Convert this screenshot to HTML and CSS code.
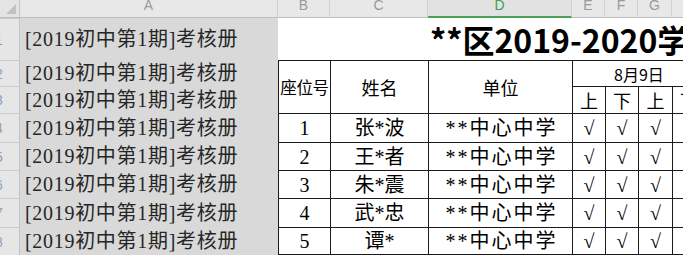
FILE: index.html
```html
<!DOCTYPE html>
<html lang="zh-CN">
<head>
<meta charset="utf-8">
<title>考核册</title>
<link rel="stylesheet" href="styles.css">
</head>
<body>
<div class="sheet">
  <div class="corner"><span class="tri"></span></div>
  <div class="ch">A</div>
  <div class="ch">B</div>
  <div class="ch">C</div>
  <div class="ch ch-sel">D</div>
  <div class="ch">E</div>
  <div class="ch">F</div>
  <div class="ch">G</div>
  <div class="ch">H</div>

  <div class="rh"><span>1</span></div>
  <div class="ca">[2019初中第1期]考核册</div>
  <div class="title">**区2019-2020学</div>

  <div class="rh"><span>2</span></div>
  <div class="ca">[2019初中第1期]考核册</div>
  <div class="tc hd hd-tall hd-seat">座位号</div>
  <div class="tc hd hd-tall">姓名</div>
  <div class="tc hd hd-tall">单位</div>
  <div class="tc hd hd-date">8月9日</div>

  <div class="rh"><span>3</span></div>
  <div class="ca">[2019初中第1期]考核册</div>
  <div class="tc hd">上</div>
  <div class="tc hd">下</div>
  <div class="tc hd">上</div>
  <div class="tc hd">下</div>

  <div class="rh"><span>4</span></div>
  <div class="ca">[2019初中第1期]考核册</div>
  <div class="tc num">1</div>
  <div class="tc txt">张*波</div>
  <div class="tc txt school">**中心中学</div>
  <div class="tc chk">√</div>
  <div class="tc chk">√</div>
  <div class="tc chk">√</div>
  <div class="tc"></div>

  <div class="rh"><span>5</span></div>
  <div class="ca">[2019初中第1期]考核册</div>
  <div class="tc num">2</div>
  <div class="tc txt">王*者</div>
  <div class="tc txt school">**中心中学</div>
  <div class="tc chk">√</div>
  <div class="tc chk">√</div>
  <div class="tc chk">√</div>
  <div class="tc"></div>

  <div class="rh"><span>6</span></div>
  <div class="ca">[2019初中第1期]考核册</div>
  <div class="tc num">3</div>
  <div class="tc txt">朱*震</div>
  <div class="tc txt school">**中心中学</div>
  <div class="tc chk">√</div>
  <div class="tc chk">√</div>
  <div class="tc chk">√</div>
  <div class="tc"></div>

  <div class="rh"><span>7</span></div>
  <div class="ca">[2019初中第1期]考核册</div>
  <div class="tc num">4</div>
  <div class="tc txt">武*忠</div>
  <div class="tc txt school">**中心中学</div>
  <div class="tc chk">√</div>
  <div class="tc chk">√</div>
  <div class="tc chk">√</div>
  <div class="tc"></div>

  <div class="rh"><span>8</span></div>
  <div class="ca">[2019初中第1期]考核册</div>
  <div class="tc num last">5</div>
  <div class="tc txt last">谭*</div>
  <div class="tc txt school last">**中心中学</div>
  <div class="tc chk last">√</div>
  <div class="tc chk last">√</div>
  <div class="tc chk last">√</div>
  <div class="tc last"></div>
</div>
</body>
</html>
```

FILE: styles.css
```css
html, body {
  margin: 0;
  padding: 0;
  background: #ffffff;
  overflow: hidden;
}

.sheet {
  width: 705px;
  height: 256px;
  display: grid;
  grid-template-columns: 20px 258px 52px 98px 144px 33px 33px 34px 33px;
  grid-template-rows: 18px 42px 26px 27px 29px 28px 28px 29px 28px;
  background: #ffffff;
  overflow: hidden;
}

.sheet > div {
  box-sizing: border-box;
  min-width: 0;
}

/* header corner */
.corner {
  background: #e4e4e4;
  border-right: 1px solid #c6c6c6;
  border-bottom: 1px solid #bdbdbd;
  display: flex;
  align-items: flex-end;
  justify-content: flex-end;
  padding: 0 3px 3px 0;
}

.tri {
  width: 0;
  height: 0;
  border-left: 10px solid transparent;
  border-bottom: 10px solid #c2c2c2;
}

/* column headers */
.ch {
  background: #e8e8e8;
  border-right: 1px solid #d2d2d2;
  border-bottom: 1px solid #bdbdbd;
  display: flex;
  align-items: flex-end;
  justify-content: center;
  padding-bottom: 6px;
  font: 14px/12px "Liberation Sans", Arial, sans-serif;
  color: #9a9a9a;
  overflow: hidden;
}

.ch-sel {
  background: #e2e2e2;
  color: #3e9f4c;
  border-bottom: 2px solid #4aa257;
  padding-bottom: 5px;
}

/* row headers */
.rh {
  background: #e6e6e6;
  border-right: 1px solid #c4c4c4;
  border-top: 1px solid #cbcbcb;
  display: flex;
  align-items: center;
  justify-content: flex-start;
  overflow: hidden;
  font: 14px/14px "Liberation Sans", Arial, sans-serif;
  color: #8da0ba;
}

.rh span {
  margin-left: -5px;
}

/* column A cells */
.ca {
  background: #d9d9d9;
  display: flex;
  align-items: center;
  padding-left: 5px;
  white-space: nowrap;
  overflow: hidden;
  font: 20px/20px "Liberation Serif", "Noto Sans CJK SC", serif;
  color: #262626;
  letter-spacing: 0.7px;
}

/* title */
.title {
  grid-column: 3 / span 7;
  background: #ffffff;
  display: flex;
  align-items: center;
  padding-left: 152px;
  white-space: nowrap;
  overflow: hidden;
  font: bold 32px/32px "Noto Sans CJK SC", sans-serif;
  color: #000000;
}

/* table cells */
.tc {
  border-left: 1px solid #1a1a1a;
  border-top: 1px solid #1a1a1a;
  display: flex;
  align-items: center;
  justify-content: center;
  white-space: nowrap;
  overflow: hidden;
  color: #000000;
  background: #ffffff;
}

.tc.last {
  border-bottom: 1px solid #1a1a1a;
}

.hd {
  font: 18px/18px "Noto Sans CJK SC", sans-serif;
}

.hd-tall {
  grid-row: span 2;
}

.hd-seat {
  font-size: 16.5px;
  letter-spacing: -0.3px;
}

.hd-date {
  grid-column: 6 / span 4;
  font-size: 16px;
}

.num {
  font: 20px/20px "Liberation Serif", serif;
}

.txt {
  font: 20px/20px "Liberation Serif", "Noto Sans CJK SC", serif;
}

.school {
  letter-spacing: 2px;
  padding-left: 2px;
}

.chk {
  font: 20px/20px "Liberation Serif", "DejaVu Serif", serif;
}
```
